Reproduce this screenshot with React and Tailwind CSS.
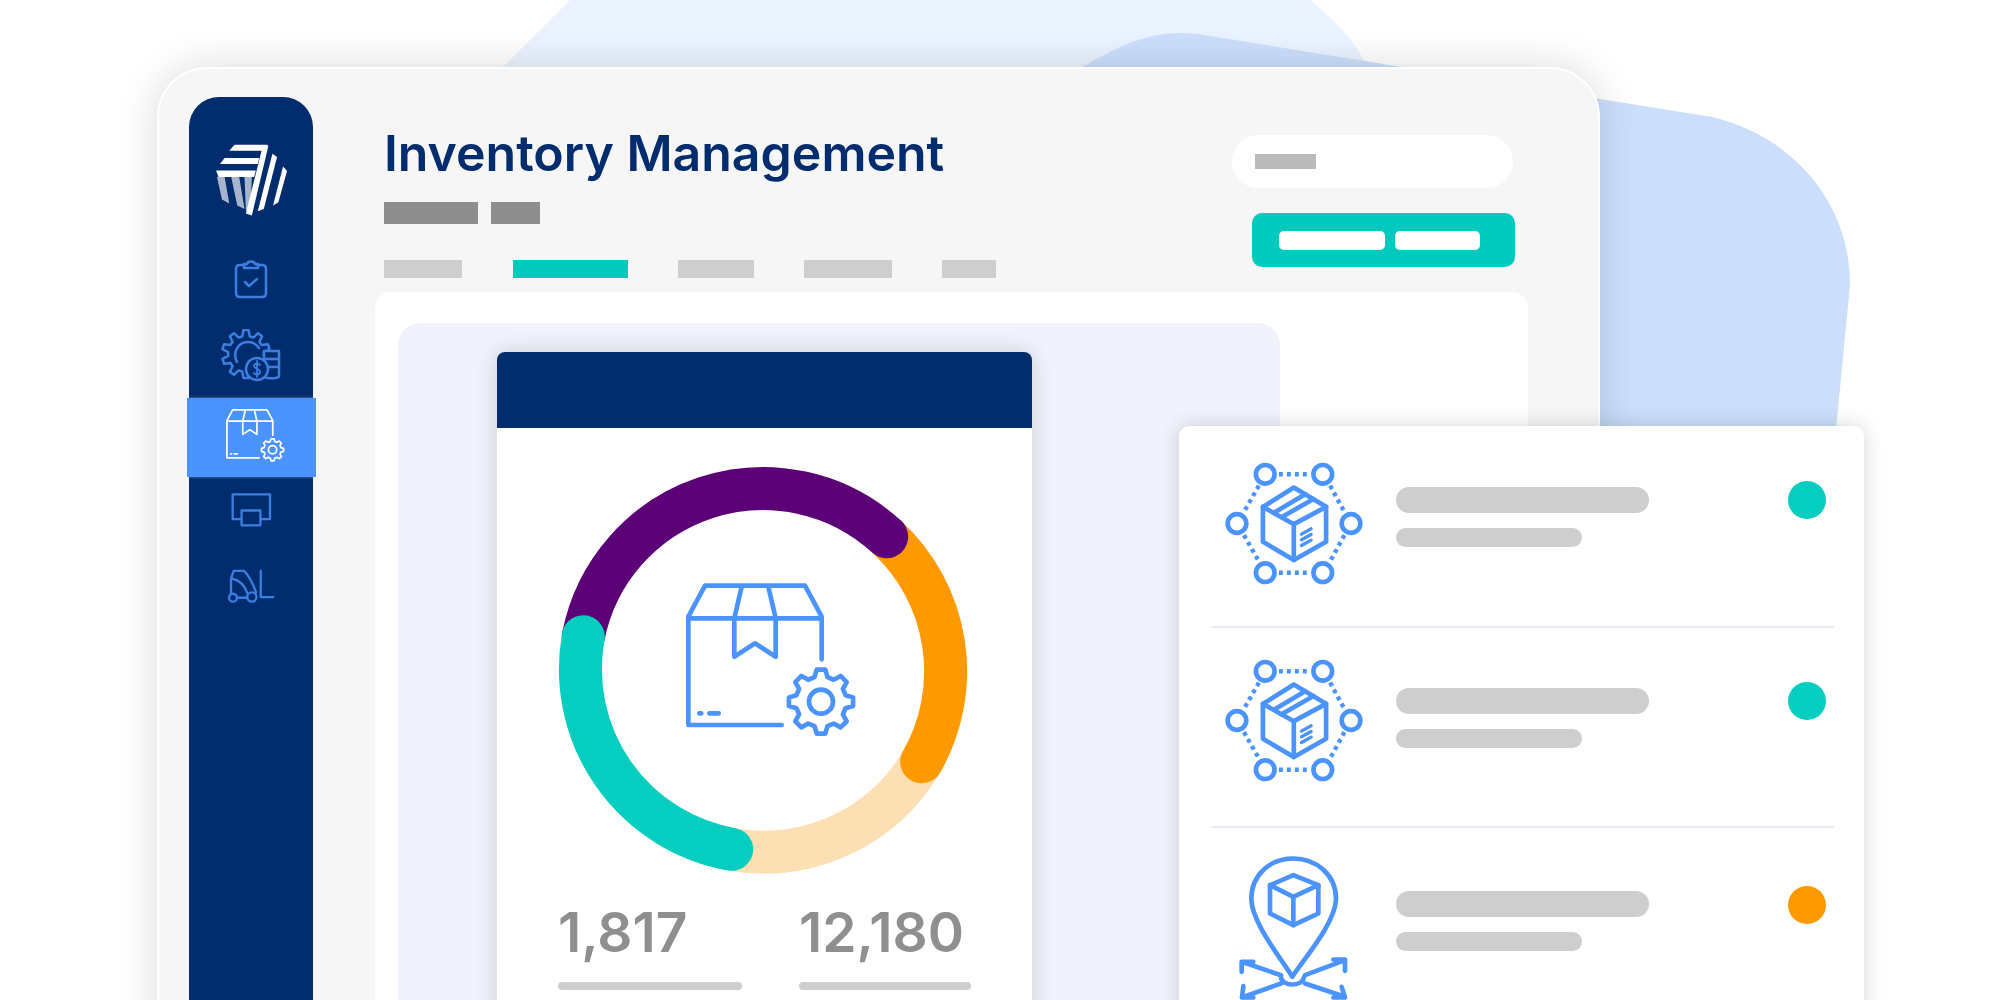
const BLUE = '#4b93ff';

const gearPath = (cx, cy, R, r, teeth = 8) => {
    const p = (Math.PI * 2) / teeth;
    const pts = [];
    for (let i = 0; i < teeth; i++) {
        const a = -Math.PI / 2 + i * p;
        [[r, -0.33], [R, -0.17], [R, 0.17], [r, 0.33]].forEach(([rad, k]) => {
            pts.push(`${(cx + rad * Math.cos(a + k * p)).toFixed(1)} ${(cy + rad * Math.sin(a + k * p)).toFixed(1)}`);
        });
    }
    return 'M' + pts.join('L') + 'Z';
};

// box with ribbon and gear, drawn in zoomed px units
const BoxGear = ({ color, sw = 14, className }) => (
    <svg viewBox="420 420 540 480" className={className} fill="none" stroke={color} strokeWidth={sw} strokeLinejoin="round" strokeLinecap="round">
        <path d="M725 855H445V530L495 437H795L845 530V658" />
        <path d="M445 535H845" />
        <path d="M605 440L583 535V650L645 610L707 650V535L685 440" />
        <path d="M478 820H484M508 820H536" />
        <path d={gearPath(843, 785, 97, 76)} />
        <circle cx="843" cy="785" r="36" />
    </svg>
);

const NetworkBox = ({ className }) => (
    <svg viewBox="70 30 430 380" className={className} fill="none" stroke={BLUE} strokeWidth="14" strokeLinejoin="round" strokeLinecap="round">
        {[[197, 72], [370, 72], [112, 220], [455, 220], [197, 368], [370, 368]].map(([x, y]) => (
            <circle key={x + '-' + y} cx={x} cy={y} r="28" />
        ))}
        <g strokeDasharray="12 12" strokeLinecap="butt" strokeWidth="13">
            <path d="M238 72H332M238 368H332M178 106L133 185M133 255L178 334M392 106L435 185M435 255L392 334" />
        </g>
        <path d="M283 112L380 170V275L283 330L190 275V170Z" />
        <path d="M190 170L283 222L380 170M283 222V330" />
        <path d="M223 188L317 132M246 201L341 147" />
        <path d="M306 252L335 236M306 269L335 253M306 286L335 270" strokeWidth="10" />
    </svg>
);

const PinBox = ({ className }) => (
    <svg viewBox="0 0 480 500" className={className} fill="none" stroke={BLUE} strokeWidth="14" strokeLinejoin="round" strokeLinecap="round">
        <path d="M247 410C225 370 124 250 124 176C124 105 180 55 250 55C320 55 378 105 378 176C378 250 270 370 247 410Z" />
        <path d="M250 105L325 135V220L250 255L180 220V135Z" />
        <path d="M180 135L250 170L325 135M250 170V255" />
        <path d="M213 412C218 440 275 440 282 412" />
        <path d="M213 405L95 365M95 395V365H130" />
        <path d="M285 405L405 360M370 358H405V392" />
        <path d="M213 430L100 470M100 438L96 472H130" />
        <path d="M285 430L405 470M395 440L405 472H370" />
    </svg>
);

const Logo = () => (
    <svg viewBox="220 250 235 225" className="w-[78px] h-[75px]">
        <g fill="#fff" fillOpacity="0.65">
            <path d="M235 352H258L272 432L250 420Z" />
            <path d="M278 352H302L318 448L296 438Z" />
            <path d="M318 352H340L336 462L322 452Z" />
        </g>
        <g fill="#fff">
            <path d="M288 255H388L383 273H272Z" />
            <path d="M258 295H362L358 313H244Z" />
            <path d="M232 332H352L347 352H240Z" />
            <path d="M372 262L390 258L340 468L322 462Z" />
            <path d="M402 282L416 292L376 448L358 455Z" />
            <path d="M434 320L446 334L420 428L404 438Z" />
        </g>
    </svg>
);

const Clipboard = () => (
    <svg viewBox="0 0 34 40" className="w-[34px] h-[40px]" fill="none" stroke={BLUE} strokeWidth="2.500" strokeLinejoin="round" strokeLinecap="round" opacity="0.8">
        <path d="M10 6H6C3.5 6 2 7.5 2 10V34C2 36.500 3.5 38 6 38H28C30.500 38 32 36.500 32 34V10C32 7.500 30.500 6 28 6H24" />
        <path d="M10 9V5H13C13.500 1.500 20.500 1.500 21 5H24V9Z" />
        <path d="M11 23L15 27L23 20" />
    </svg>
);

// gear with a coin and a stack in front of it
const GearCoins = () => (
    <svg viewBox="0 0 60 54" className="w-[60px] h-[54px]" fill="none" stroke={BLUE} strokeWidth="2.500" strokeLinejoin="round" strokeLinecap="round" opacity="0.8">
        <path d={gearPath(25, 25, 24, 18, 10)} />
        <path d="M16 33C11 24 17 13 27 13C32 13 36 16 38 19" />
        <path d="M43 22H58V47C58 50 43 50 43 47Z" fill="#012d6e" />
        <path d="M43 30H58M43 38H58" />
        <circle cx="36" cy="40" r="11" fill="#012d6e" />
        <path d="M39 36C38 34 33 34 33 37C33 40 39 39 39 43C39 46 34 46 33 44M36 32V48" strokeWidth="1.800" />
    </svg>
);

const Monitor = () => (
    <svg viewBox="170 340 145 115" className="w-[48px] h-[38px]" fill="none" stroke={BLUE} strokeWidth="7" strokeLinejoin="round" opacity="0.8">
        <path d="M213 425H187V350H300V425H272" />
        <rect x="214" y="399" width="57" height="45" />
    </svg>
);

const Forklift = () => (
    <svg viewBox="165 565 155 115" className="w-[52px] h-[38px]" fill="none" stroke={BLUE} strokeWidth="7" strokeLinejoin="round" strokeLinecap="round" opacity="0.8">
        <path d="M182 645V600L190 577H222C235 590 250 620 258 642" />
        <path d="M185 600C210 605 225 625 232 645" />
        <path d="M272 577V656H310" />
        <circle cx="188" cy="658" r="12" />
        <circle cx="245" cy="656" r="14" />
        <path d="M200 658H231" />
    </svg>
);

const Donut = () => (
    <div className="relative w-[420px] h-[420px] ml-[56px] mt-[31px]">
        <svg viewBox="0 0 420 420" className="w-[420px] h-[420px]" fill="none" strokeWidth="43">
            <path d="M368.700 302.700A183 183 0 0 1 178.700 390.300" stroke="#fddfb4" />
            <path d="M333.700 77.700A183 183 0 0 1 368.700 302.700" stroke="#ff9900" strokeLinecap="round" />
            <path d="M30.300 177.700A183 183 0 0 1 333.700 77.700" stroke="#5c0078" strokeLinecap="round" />
            <path d="M30.300 177.700A183 183 0 0 0 178.700 390.300" stroke="#05cdc0" strokeLinecap="round" />
        </svg>
        <div className="absolute left-[127px] top-[121px]">
            <BoxGear color={BLUE} className="w-[180px] h-[160px]" />
        </div>
    </div>
);

const InfoRow = ({ icon, iconClass, barClass, dotClass, dotColor, rowClass }) => (
    <div className={`flex items-start ${rowClass}`}>
        <div className={`w-[217px] shrink-0 ${iconClass}`}>{icon}</div>
        <div className={`flex flex-col gap-[15px] w-[253px] ${barClass}`}>
            <div className="h-[26px] rounded-full bg-[#cecece]" />
            <div className="h-[19px] w-[186px] rounded-full bg-[#cecece]" />
        </div>
        <div className={`ml-auto mr-[38px] w-[38px] h-[38px] rounded-full ${dotColor} ${dotClass}`} />
    </div>
);

const App = () => (
    <div className="relative w-[2000px] h-[1000px] overflow-hidden bg-white" style={{ fontFamily: 'Inter, Roboto, "Liberation Sans", sans-serif' }}>
        {/* backdrop blobs */}
        <svg viewBox="0 0 2000 1000" className="absolute inset-0 w-[2000px] h-[1000px]">
            <path d="M500 70L570 0H1310C1335 20 1355 40 1372 75Z" fill="#eaf3ff" />
            <path d="M1077 70C1115 48 1150 28 1198 34L1712 117C1790 135 1850 200 1850 285L1835 440H1077Z" fill="#cbdffc" />
        </svg>

        <div className="relative pl-[157px] pt-[67px]">
            {/* main window */}
            <div className="flex w-[1443px] h-[1100px] rounded-[50px] border-2 border-white bg-[#f6f6f6] pl-[30px] pt-[28px] shadow-[0_0_40px_rgba(0,0,0,0.15)]">
                <aside className="flex flex-col items-center w-[124px] shrink-0 h-[1000px] rounded-[30px] bg-[#012d6e] pt-[46px]">
                    <Logo />
                    <div className="mt-[41px]"><Clipboard /></div>
                    <div className="mt-[30px]"><GearCoins /></div>
                    <div className="mt-[15px] ml-[1px] flex h-[79px] w-[129px] shrink-0 items-center justify-center bg-[#4b93ff] shadow-[0_0_3px_rgba(255,255,255,0.4)]">
                        <div className="pl-[6px] pb-[4px]">
                            <BoxGear color="#fff" sw={15} className="w-[62px] h-[55px]" />
                        </div>
                    </div>
                    <div className="mt-[14px]"><Monitor /></div>
                    <div className="mt-[38px]"><Forklift /></div>
                </aside>

                <main className="flex flex-col flex-1 pl-[62px] pr-[70px]">
                    <header className="flex justify-between h-[195px] shrink-0">
                        <div className="pl-[9px]">
                            <h1 className="text-[50px] leading-[60px] font-semibold text-[#012d6e] mt-[26px] whitespace-nowrap">Inventory Management</h1>
                            <div className="flex gap-[13px] mt-[19px]">
                                <div className="w-[94px] h-[22px] bg-[#8e8e8e]" />
                                <div className="w-[49px] h-[22px] bg-[#8e8e8e]" />
                            </div>
                            <div className="flex mt-[36px]">
                                <div className="w-[78px] h-[18px] bg-[#cecece]" />
                                <div className="w-[115px] h-[18px] ml-[51px] bg-[#00c9bd]" />
                                <div className="w-[76px] h-[18px] ml-[50px] bg-[#cecece]" />
                                <div className="w-[88px] h-[18px] ml-[50px] bg-[#cecece]" />
                                <div className="w-[54px] h-[18px] ml-[50px] bg-[#cecece]" />
                            </div>
                        </div>
                        <div className="flex flex-col items-end pr-[13px] pt-[38px]">
                            <div className="flex items-center w-[281px] h-[53px] mr-[2px] rounded-full bg-white pl-[23px]">
                                <div className="w-[61px] h-[15px] bg-[#bbbbbb]" />
                            </div>
                            <div className="flex items-center gap-[10px] w-[263px] h-[54px] mt-[25px] rounded-[10px] bg-[#00c9bd] pl-[27px]">
                                <div className="w-[106px] h-[19px] rounded-[5px] bg-white" />
                                <div className="w-[85px] h-[19px] rounded-[5px] bg-white" />
                            </div>
                        </div>
                    </header>

                    <section className="flex-1 rounded-t-[16px] bg-white pl-[23px] pt-[31px]">
                        <div className="w-[882px] h-[900px] rounded-t-[22px] bg-[#f1f2fb] pl-[99px] pt-[29px]">
                            <div className="w-[535px] h-[800px] rounded-[8px] bg-white shadow-[0_0_22px_rgba(0,0,0,0.16)]">
                                <div className="h-[76px] rounded-t-[8px] bg-[#012d6e]" />
                                <Donut />
                                <div className="flex pl-[61px] mt-[21px]">
                                    <div className="w-[184px]">
                                        <div className="text-[55px] leading-[64px] font-semibold text-[#8f8f8f]">1,817</div>
                                        <div className="h-[8px] mt-[18px] rounded-full bg-[#cecece]" />
                                    </div>
                                    <div className="w-[172px] ml-[57px]">
                                        <div className="text-[55px] leading-[64px] font-semibold text-[#8f8f8f]">12,180</div>
                                        <div className="h-[8px] mt-[18px] rounded-full bg-[#cecece]" />
                                    </div>
                                </div>
                            </div>
                        </div>
                    </section>
                </main>
            </div>
        </div>

        {/* floating status card */}
        <div className="absolute left-[1179px] top-[426px] w-[685px] h-[700px] rounded-[10px] bg-white shadow-[0_0_20px_rgba(0,0,0,0.17)]">
            <InfoRow rowClass="h-[200px]" iconClass="pl-[44px] pt-[34px]" barClass="pt-[61px]" dotClass="mt-[55px]" dotColor="bg-[#05cdc0]"
                icon={<NetworkBox className="w-[143px] h-[127px]" />} />
            <div className="h-[2px] ml-[32px] mr-[30px] bg-[#f1e9f7]" />
            <InfoRow rowClass="h-[198px]" iconClass="pl-[44px] pt-[29px]" barClass="pt-[60px]" dotClass="mt-[54px]" dotColor="bg-[#05cdc0]"
                icon={<NetworkBox className="w-[143px] h-[127px]" />} />
            <div className="h-[2px] ml-[32px] mr-[30px] bg-[#f1e9f7]" />
            <InfoRow rowClass="h-[200px]" iconClass="pl-[31px] pt-[12px]" barClass="pt-[63px]" dotClass="mt-[58px]" dotColor="bg-[#ff9900]"
                icon={<PinBox className="w-[160px] h-[167px]" />} />
        </div>
    </div>
);

export default App;
